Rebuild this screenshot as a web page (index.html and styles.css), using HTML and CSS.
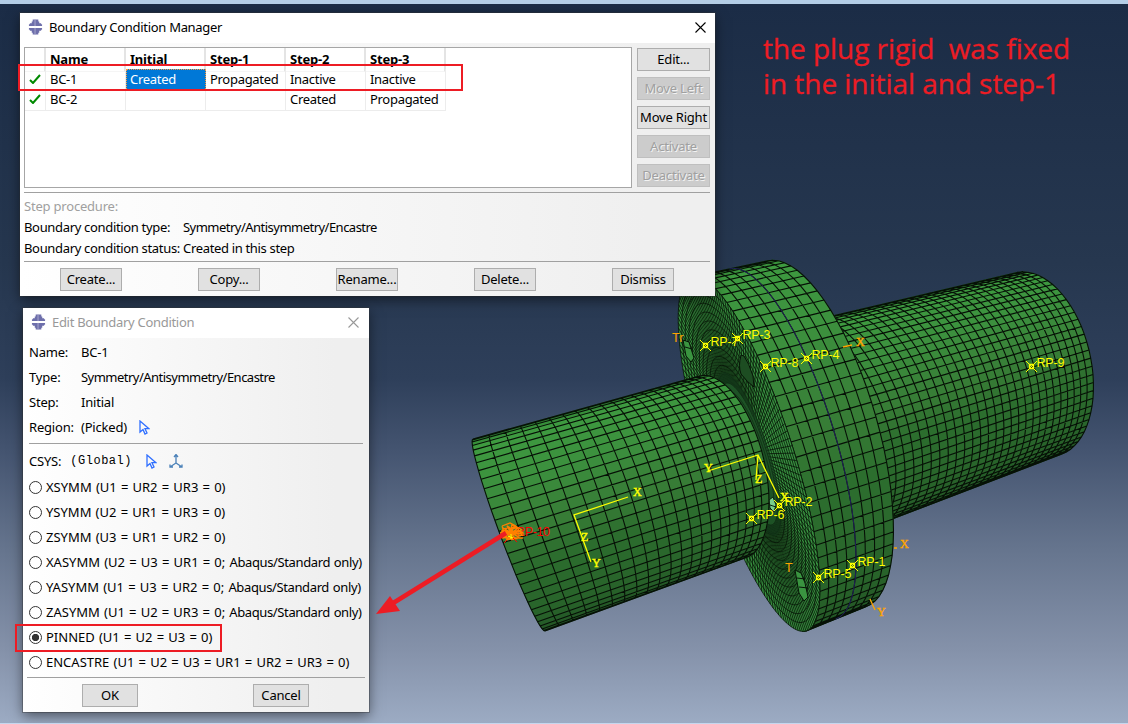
FILE: index.html
```html
<!DOCTYPE html>
<html lang="en">
<head>
<meta charset="utf-8">
<title>Boundary Condition Manager</title>
<link rel="stylesheet" href="styles.css">
</head>
<body>
<main class="viewport">
  <svg class="model" id="model" viewBox="0 0 1128 724"></svg>

  <section class="window manager">
    <header class="titlebar">
      <svg class="logo" viewBox="0 0 16 16"><path fill="#6e6fab" d="M5 0h6v2h1v2h2v1h1v2H1V5h1V4h2V2h1zM1 9h14v2h-1v1h-2v2h-1v2H5v-2H4v-2H2v-1H1z"/><path stroke="#aaa9cf" d="M7.500 0v7M7.500 9v7"/></svg>
      <h1>Boundary Condition Manager</h1>
      <svg class="close" viewBox="0 0 11 11"><path d="M.5.5l10 10M10.500 .5l-10 10"/></svg>
    </header>
    <div class="manager-top">
      <div class="table">
        <div class="row head"><span></span><span>Name</span><span>Initial</span><span>Step-1</span><span>Step-2</span><span>Step-3</span></div>
        <div class="row"><span><svg class="check" viewBox="0 0 12 10"><path d="M1 6l3 3L11 1"/></svg></span><span>BC-1</span><span class="selected">Created</span><span>Propagated</span><span>Inactive</span><span>Inactive</span></div>
        <div class="row"><span><svg class="check" viewBox="0 0 12 10"><path d="M1 6l3 3L11 1"/></svg></span><span>BC-2</span><span></span><span></span><span>Created</span><span>Propagated</span></div>
      </div>
      <div class="side">
        <button>Edit...</button><button disabled>Move Left</button><button>Move Right</button><button disabled>Activate</button><button disabled>Deactivate</button>
      </div>
    </div>
    <div class="info">
      <span class="muted">Step procedure:</span><span></span>
      <span>Boundary condition type:</span><span class="tight">Symmetry/Antisymmetry/Encastre</span>
      <span>Boundary condition status:</span><span>Created in this step</span>
    </div>
    <footer class="actions"><button>Create...</button><button>Copy...</button><button>Rename...</button><button>Delete...</button><button>Dismiss</button></footer>
  </section>

  <section class="window editor">
    <header class="titlebar inactive">
      <svg class="logo" viewBox="0 0 16 16"><path fill="#6e6fab" d="M5 0h6v2h1v2h2v1h1v2H1V5h1V4h2V2h1zM1 9h14v2h-1v1h-2v2h-1v2H5v-2H4v-2H2v-1H1z"/><path stroke="#aaa9cf" d="M7.500 0v7M7.500 9v7"/></svg>
      <h1>Edit Boundary Condition</h1>
      <svg class="close" viewBox="0 0 11 11"><path d="M.5.5l10 10M10.500 .5l-10 10"/></svg>
    </header>
    <div class="fields">
      <span>Name:</span><span>BC-1</span>
      <span>Type:</span><span class="tight">Symmetry/Antisymmetry/Encastre</span>
      <span>Step:</span><span>Initial</span>
      <span>Region:</span><span>(Picked)<svg class="cursor" viewBox="0 0 11 15"><path d="M1 1v11l3-2.500 2 4.500 2-1-2-4.300h4z"/></svg></span>
    </div>
    <div class="csys"><span>CSYS:</span><span class="mono">(Global)</span><svg class="cursor" viewBox="0 0 11 15"><path d="M1 1v11l3-2.500 2 4.500 2-1-2-4.300h4z"/></svg><svg class="triad" viewBox="0 0 14 14"><path d="M7 1v8L1 13M7 9l6 4M5 3l2-2.500L9 3M1 10.500V13h3M10 13h3v-2.500"/></svg></div>
    <div class="options">
      <label><i></i><span>XSYMM (U1 = UR2 = UR3 = 0)</span></label>
      <label><i></i><span>YSYMM (U2 = UR1 = UR3 = 0)</span></label>
      <label><i></i><span>ZSYMM (U3 = UR1 = UR2 = 0)</span></label>
      <label><i></i><span>XASYMM (U2 = U3 = UR1 = 0; <em>Abaqus/Standard only)</em></span></label>
      <label><i></i><span>YASYMM (U1 = U3 = UR2 = 0; <em>Abaqus/Standard only)</em></span></label>
      <label><i></i><span>ZASYMM (U1 = U2 = UR3 = 0; <em>Abaqus/Standard only)</em></span></label>
      <label><i class="on"></i><span>PINNED (U1 = U2 = U3 = 0)</span></label>
      <label><i></i><span>ENCASTRE (U1 = U2 = U3 = UR1 = UR2 = UR3 = 0)</span></label>
    </div>
    <footer class="confirm"><button>OK</button><button>Cancel</button></footer>
  </section>

  <svg class="marks" viewBox="0 0 1128 724">
    <g fill="none" stroke="#ed1c24" stroke-width="2"><path d="M19 65h443v25H19zM16 625h205v26H16z"/></g>
    <path stroke="#ed1c24" stroke-width="4.500" d="M506 533L390 605"/><path fill="#ed1c24" d="M376 614l14-18 10 15z"/>
  </svg>
  <p class="note">the plug rigid&nbsp; was fixed<br>in the initial and step-1</p>
</main>
<script src="model.js"></script>
</body>
</html>
```
FILE: styles.css
```css
* { box-sizing: border-box; }
body { margin: 0; }
.viewport {
  position: relative; width: 1128px; height: 724px; overflow: hidden;
  border-top: 4px solid #b3cde6; border-bottom: 1px solid #c4d7ee;
  background: linear-gradient(#1b2c46 0, #26374f 36%, #2e3f5a 52%, #445470 62%, #66758e 76%, #8592aa 90%, #9cabc3 100%);
  font: 13px/20px "Noto Sans", "Open Sans", sans-serif; color: #000;
}
.model, .marks { position: absolute; left: 0; top: -4px; width: 1128px; height: 724px; }
.model .lbl { font: 12.500px "Liberation Sans", sans-serif; fill: #ff0; }
.model .axis { font: 12px "Liberation Serif", serif; fill: #ff0; stroke: #ff0; stroke-width: .4; }
.model .orange { fill: #ffa500; }
.model .axis.orange { stroke: #ffa500; }
.window {
  position: absolute; display: flex; flex-direction: column;
  background: linear-gradient(90deg, #fff 0, #fdfdfd 10%, #efefef 90%);
  box-shadow: 0 4px 12px rgba(0,0,0,.5), 0 0 0 1px rgba(60,60,60,.35);
}
.manager { left: 20px; top: 9px; width: 695px; height: 283px; }
.editor { left: 23px; top: 304px; width: 346px; height: 404px; }
.titlebar { display: flex; align-items: center; height: 30px; flex: none; padding: 0 9px 2px 8px; background: #fff; }
.titlebar h1 { flex: 1; margin: 0 0 0 6px; font: inherit; letter-spacing: -.3px; }
.inactive { color: #999; }
.inactive h1 { letter-spacing: -.3px; }
.logo { width: 15px; height: 16px; }
.close { width: 11px; height: 11px; fill: none; stroke: #000; stroke-width: 1.100; }
.inactive .close { stroke: #999; margin-right: 1px; }
.manager-top { display: flex; gap: 5px; padding: 4px 5px 0 4px; }
.table { width: 608px; height: 141px; background: #fff; border: 1px solid #a6a6a6; }
.row { display: grid; grid-template-columns: 21px repeat(5, 80px); height: 20px; width: 421px; letter-spacing: -.3px; }
.row span { border-right: 1px solid #ececec; border-bottom: 1px solid #ececec; padding-left: 4px; line-height: 21px; white-space: nowrap; }
.row.head { height: 21px; font-weight: 700; letter-spacing: -.2px; }
.row.head span { line-height: 23px; border-bottom-color: #f5f5f5; border-right: 2px solid #e4e4e4; }
.row .selected { background: #0078d7; color: #fff; border: 1px dotted #ff9a3c; padding-left: 3px; line-height: 19px; }
.check { display: block; width: 12px; height: 10px; margin: 5px 0 0; fill: none; stroke: #008a00; stroke-width: 2; }
.side { display: flex; flex-direction: column; gap: 6px; padding-top: 1px; width: 73px; }
button { height: 23px; padding: 0; border: 1px solid #adadad; background: #e1e1e1; color: #000; font: 13px/19px "Noto Sans", sans-serif; letter-spacing: -.2px; white-space: nowrap; }
button:disabled { background: #ccc; border-color: #bfbfbf; color: #a0a0a0; text-shadow: 1px 1px #f3f3f3; }
.info { display: grid; grid-template-columns: 159px 1fr; grid-auto-rows: 21px; height: 70px; margin: 4px 5px 0 4px; padding-top: 3px; border-top: 1px solid #a0a0a0; border-bottom: 1px solid #a0a0a0; letter-spacing: -.33px; white-space: nowrap; }
.muted { color: #a0a0a0; letter-spacing: -.2px; }
.tight { letter-spacing: -.52px; }
.actions { display: flex; gap: 76px; padding: 6px 0 0 40px; }
.actions button { width: 62px; }
.fields { display: grid; grid-template-columns: 52px 1fr; grid-auto-rows: 25px; line-height: 25px; height: 106px; margin: 0 6px; padding-top: 2px; border-bottom: 1px solid #a0a0a0; white-space: nowrap; }
.fields > span { display: flex; align-items: center; }
.fields > span:not(.tight) { letter-spacing: -.2px; }
.cursor { width: 11px; height: 15px; fill: none; stroke: #2f6fff; stroke-width: 1.300; margin-left: 12px; }
.csys { display: flex; align-items: center; height: 31px; padding: 3px 6px 0; }
.csys span { letter-spacing: -.2px; }
.csys .mono { font: 12px/20px "Liberation Mono", monospace; margin-left: 9px; letter-spacing: .5px; }
.csys .cursor { margin-left: 14px; }
.triad { width: 14px; height: 14px; margin-left: 12px; fill: none; stroke: #4a80b8; stroke-width: 1.300; }
.options { height: 203px; margin: 0 4px; border-bottom: 1px solid #a0a0a0; }
.options label { display: flex; align-items: center; height: 25px; padding-left: 2px; white-space: nowrap; }
.options span { position: relative; top: -1px; word-spacing: .8px; }
.options em { font-style: normal; letter-spacing: -.38px; }
.options i { flex: none; width: 13px; height: 13px; border: 1px solid #333; border-radius: 50%; background: #fff; margin-right: 4px; }
.options i.on { background: radial-gradient(circle, #333 0 3.300px, #fff 4px); }
.confirm { display: flex; gap: 115px; padding: 6px 0 0 59px; }
.confirm button { width: 56px; }
.note { position: absolute; left: 763px; top: 27px; margin: 0; color: #ed1c24; font: 28px/35px "Open Sans", "Noto Sans", sans-serif; white-space: nowrap; -webkit-text-stroke: .3px #ed1c24; letter-spacing: -.05px; }
```
FILE: model.js
```js
const svg = document.getElementById('model');
const out = [];
const mix = (a, b, t) => a + (b - a) * t;
const fix = p => p[0].toFixed(1) + ' ' + p[1].toFixed(1);

// Section: centre c, half-diameter a (towards the bottom), bulge b.
function point(s0, s1, s, th) {
  const v = k => mix(s0[k], s1[k], s);
  const co = -Math.cos(th), si = Math.sin(th);
  return [v(0) + v(2) * co + v(4) * si, v(1) + v(3) * co + v(5) * si];
}
const ramp = [[0, 36, 104, 40], [0.1, 62, 155, 64], [0.3, 60, 145, 62], [0.48, 55, 124, 54], [0.58, 44, 110, 46], [0.8, 40, 98, 42], [1, 30, 76, 33]];
function shade(t) {
  t = Math.max(0, Math.min(1, t));
  let i = 1;
  while (ramp[i][0] < t) i++;
  const p = ramp[i - 1], q = ramp[i], u = (t - p[0]) / (q[0] - p[0]);
  return 'rgb(' + [1, 2, 3].map(k => Math.round(mix(p[k], q[k], u))) + ')';
}
function cylinder(s0, s1, rows, stops, pad, width) {
  const lo = -pad, hi = Math.PI + pad;
  const th = i => mix(lo, hi, i / rows);
  let lines = '';
  for (let i = 0; i < rows; i++) {
    const q = [point(s0, s1, 0, th(i)), point(s0, s1, 1, th(i)), point(s0, s1, 1, th(i + 1)), point(s0, s1, 0, th(i + 1))];
    const c = shade(i / rows);
    out.push(`<path fill="${c}" stroke="${c}" stroke-width=".6" d="M${q.map(fix).join('L')}z"/>`);
  }
  for (let i = 0; i <= rows; i++) lines += 'M' + fix(point(s0, s1, 0, th(i))) + 'L' + fix(point(s0, s1, 1, th(i)));
  for (const s of stops) {
    for (let i = 0; i <= rows; i++) lines += (i ? 'L' : 'M') + fix(point(s0, s1, s, th(i)));
  }
  out.push(`<path fill="none" stroke="#061006" stroke-width="${width}" d="${lines}"/>`);
}
function geometric(n, ratio) {
  const r = [0];
  let w = 1;
  for (let i = 0; i < n; i++) { r.push(r[i] + w); w *= ratio; }
  return r.map(x => x / r[n]);
}

cylinder([830, 427, 36, 102, 44, -12], [1037, 364, 22, 91, 52, -14], 36, geometric(27, 0.985), 0.03, 1.1);

const face = [749, 454, 57, 177, 42, -12];
const back = [816, 434, 49, 173, 60, -17];
cylinder(face, back, 38, geometric(8, 1), 0.08, 1.1);

// Partition seam around the flange rim.
let seam = '';
for (let i = 0; i <= 40; i++) seam += (i ? 'L' : 'M') + fix(point(face, back, 0.5, i * Math.PI / 40));
out.push(`<path fill="none" stroke="#20205a" stroke-width="1" d="${seam}"/>`);

// Flange face with its fine radial mesh.
const ring = (k, th) => {
  const co = -Math.cos(th) * k, si = Math.sin(th) * k;
  return [face[0] + face[2] * co + face[4] * si, face[1] + face[3] * co + face[5] * si];
};
const loop = k => Array.from({ length: 121 }, (_, i) => (i ? 'L' : 'M') + fix(ring(k, i * Math.PI / 60))).join('');
out.push(`<path fill="#389040" d="${loop(1)}z"/>`);
let fine = '';
for (let k = 1; k > 0.3; k -= 0.05) fine += loop(k);
for (let i = 0; i < 150; i++) fine += 'M' + fix(ring(0.4, i * Math.PI / 75)) + 'L' + fix(ring(1, i * Math.PI / 75));
out.push(`<path fill="none" stroke="#061406" stroke-width=".8" d="${fine}"/>`);
out.push(`<path fill="#12381a" fill-opacity=".7" d="${loop(0.46)}z"/>`);
out.push('<path fill="#1d4d22" stroke="#061406" d="M741 355Q738 366 741 374Q747 382 754 387L753 376Q749 363 744 356z"/>');
out.push('<path fill="#3a9440" stroke="#061406" d="M795 570l6 3 4 10 3 14-4 4-5-8zM797 578l8 1M799 587l9 1M683 340l6 2 5 16-3 4-5-6zM685 347l7 2"/>');
out.push('<path fill="#79cf8d" stroke="#0a200c" d="M769 500l4-3 3 8-2 7-4-4zM770 505l6 2"/>');

cylinder([509, 535, 36, 96, -8, 2], [722, 467, 23, 91, 41, -11], 27, geometric(21, 0.955), 0, 1.1);

const L = 'stroke="#ff0" fill="none"';
const refs = [[705, 345, 'RP-7'], [737, 338, 'RP-3'], [765, 366, 'RP-8'], [806, 358, 'RP-4'], [1031, 366, 'RP-9'], [779, 505, 'RP-2'], [751, 518, 'RP-6'], [852, 565, 'RP-1'], [818, 577, 'RP-5']];
for (const [x, y, name] of refs) {
  out.push(`<path ${L} d="M${x - 5} ${y - 5}l11 11m0-11l-11 11"/><path ${L} stroke-width="1.300" d="M${x - 1.5} ${y - 1.5}h4v4h-4z"/>`);
  out.push(`<text class="lbl" x="${x + 5.5}" y="${y + 1}" textLength="28">${name}</text>`);
}
out.push(`<path ${L} stroke-width="1.300" d="M628 497L574 515L591 562M708 471L758 455L779 498M758 455L756 480"/>`);
for (const [x, y, t] of [[633, 496, 'X'], [581, 541, 'Z'], [592, 567, 'Y'], [704, 472, 'Y'], [755, 483, 'Z'], [780, 501, 'X']]) out.push(`<text class="axis" x="${x}" y="${y}">${t}</text>`);
out.push('<path stroke="#ffa500" stroke-width="1.300" d="M843 347l9-2M894 548h3M870 599l5 11"/>');
for (const [x, y, t] of [[856, 346, 'X'], [900, 548, 'X'], [877, 616, 'Y']]) out.push(`<text class="axis orange" x="${x}" y="${y}">${t}</text>`);
out.push('<text class="lbl orange" x="672" y="342">Tr</text><text class="lbl orange" x="785" y="572">T</text>');
out.push('<text class="lbl" x="516" y="536" textLength="34" style="fill:#f00">RP-10</text>');
let burst = '';
for (let i = 0; i < 13; i++) {
  const a = i * 2.4, x = 511 + 9 * Math.cos(a), y = 531 + 6 * Math.sin(a);
  burst += `M511 533L${x.toFixed(1)} ${y.toFixed(1)}l3 2-5 1z`;
}
out.push(`<path fill="none" stroke="#ff8000" stroke-width="1.300" d="${burst}M502 526l8-3 6 3 7 10M502 526l4 12h17"/>`);
out.push('<path stroke="#ff0" d="M508 536l5 2m-2-4v5"/><path stroke="#f00" d="M507 540l-3 3M513 538l4 4"/>');
svg.innerHTML = out.join('');
```
